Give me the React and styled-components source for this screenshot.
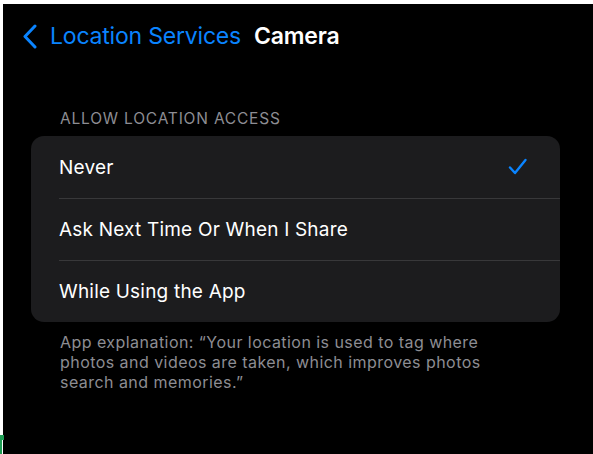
import React from 'react'
import styled, { createGlobalStyle } from 'styled-components'

const GlobalStyle = createGlobalStyle`
  html, body {
    margin: 0;
    padding: 0;
    background: #ffffff;
    height: 100%;
  }
  body {
    font-family: Inter, 'Noto Sans', 'Liberation Sans', sans-serif;
    -webkit-font-smoothing: antialiased;
  }
`

const Frame = styled.div`
  position: relative;
  padding: 4px 0 0 3px;
  height: 454px;
  box-sizing: border-box;
  overflow: hidden;
`

const Screen = styled.div`
  background: #000000;
  height: 100%;
  display: flex;
  flex-direction: column;
`

const NavBar = styled.header`
  display: flex;
  align-items: center;
  height: 64px;
  padding-left: 19px;
`

const BackButton = styled.button`
  display: flex;
  align-items: center;
  gap: 12px;
  background: none;
  border: 0;
  padding: 0;
  color: #0a84ff;
  font: inherit;
  font-size: 23px;
  letter-spacing: -0.2px;
  cursor: pointer;
`

const Title = styled.h1`
  margin: 0 0 0 13px;
  color: #ffffff;
  font-size: 23px;
  font-weight: 600;
  letter-spacing: -0.2px;
`

const Content = styled.main`
  padding: 36px 33px 0 28px;
`

const SectionHeader = styled.div`
  box-sizing: border-box;
  padding: 5px 0 0 29px;
  height: 32px;
  color: #8d8d93;
  font-size: 15.5px;
  letter-spacing: 0.8px;
`

const Card = styled.ul`
  list-style: none;
  margin: 0;
  padding: 0;
  background: #1c1c1e;
  border-radius: 13px;
  overflow: hidden;
`

const Row = styled.li`
  display: flex;
  align-items: center;
  justify-content: space-between;
  height: 62px;
  margin-left: 28px;
  padding-right: 32px;
  color: #ffffff;
  font-size: 19px;
  letter-spacing: 0.2px;
  box-sizing: border-box;
  border-top: ${p => (p.$first ? 'none' : '1px solid #38383a')};
`

const Footer = styled.p`
  margin: 10px 0 0;
  padding-left: 29px;
  width: 440px;
  color: #8d8d93;
  font-size: 16px;
  line-height: 20px;
  letter-spacing: 0.45px;
`

const Marker = styled.div`
  position: absolute;
  left: 0;
  top: 435px;
  width: 2px;
  height: 19px;
  background: #1f9d55;

  &::before {
    content: '';
    position: absolute;
    left: 0;
    top: 0;
    width: 4px;
    height: 5px;
    background: #1f9d55;
  }
`

const Chevron = () => (
  <svg width="16" height="25" viewBox="0 0 16 25" fill="none">
    <path
      d="M13 2 L3 12.5 L13 23"
      stroke="#0a84ff"
      strokeWidth="3"
      strokeLinecap="round"
      strokeLinejoin="round"
    />
  </svg>
)

const Check = () => (
  <svg width="20" height="18" viewBox="0 0 20 18" fill="none">
    <path
      d="M2 9.5 L7 15 L17.5 2"
      stroke="#0a84ff"
      strokeWidth="2.4"
      strokeLinecap="round"
      strokeLinejoin="round"
    />
  </svg>
)

const options = ['Never', 'Ask Next Time Or When I Share', 'While Using the App']

const App = () => {
  const selected = 'Never'
  return (
    <Frame>
      <GlobalStyle />
      <Screen>
        <NavBar>
          <BackButton>
            <Chevron />
            Location Services
          </BackButton>
          <Title>Camera</Title>
        </NavBar>
        <Content>
          <SectionHeader>ALLOW LOCATION ACCESS</SectionHeader>
          <Card>
            {options.map((o, i) => (
              <Row key={o} $first={i === 0}>
                {o}
                {o === selected && <Check />}
              </Row>
            ))}
          </Card>
          <Footer>
            App explanation: “Your location is used to tag where photos and
            videos are taken, which improves photos search and memories.”
          </Footer>
        </Content>
      </Screen>
      <Marker />
    </Frame>
  )
}

export default App
